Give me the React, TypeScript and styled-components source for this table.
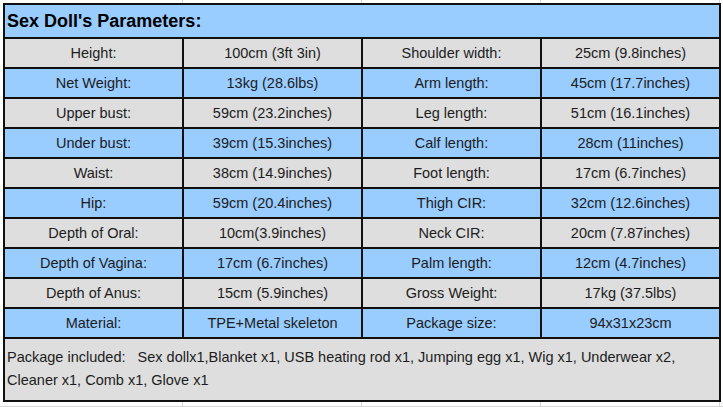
import React from "react";
import styled, { createGlobalStyle } from "styled-components";

type Shade = "gray" | "blue";

const rows: { shade: Shade; cells: [string, string, string, string] }[] = [
  { shade: "gray", cells: ["Height:", "100cm (3ft 3in)", "Shoulder width:", "25cm (9.8inches)"] },
  { shade: "blue", cells: ["Net Weight:", "13kg (28.6lbs)", "Arm length:", "45cm (17.7inches)"] },
  { shade: "gray", cells: ["Upper bust:", "59cm (23.2inches)", "Leg length:", "51cm (16.1inches)"] },
  { shade: "blue", cells: ["Under bust:", "39cm (15.3inches)", "Calf length:", "28cm (11inches)"] },
  { shade: "gray", cells: ["Waist:", "38cm (14.9inches)", "Foot length:", "17cm (6.7inches)"] },
  { shade: "blue", cells: ["Hip:", "59cm (20.4inches)", "Thigh CIR:", "32cm (12.6inches)"] },
  { shade: "gray", cells: ["Depth of Oral:", "10cm(3.9inches)", "Neck CIR:", "20cm (7.87inches)"] },
  { shade: "blue", cells: ["Depth of Vagina:", "17cm (6.7inches)", "Palm length:", "12cm (4.7inches)"] },
  { shade: "gray", cells: ["Depth of Anus:", "15cm (5.9inches)", "Gross Weight:", "17kg (37.5lbs)"] },
  { shade: "blue", cells: ["Material:", "TPE+Metal skeleton", "Package size:", "94x31x23cm"] },
];

const BLUE = "#99ccff";
const GRAY = "#dedede";

export default function App() {
  return (
    <Sheet>
      <GlobalStyle />
      <GridStrip $height={3}>
        {[0, 1, 2, 3].map((i) => (
          <GridCell key={i} />
        ))}
      </GridStrip>
      <ParamTable>
        <TitleCell>Sex Doll's Parameters:</TitleCell>
        {rows.map((row, r) =>
          row.cells.map((text, c) => (
            <Cell key={`${r}-${c}`} $shade={row.shade}>
              {text}
            </Cell>
          ))
        )}
        <PackageCell>
          <span>
            {"Package included:   Sex dollx1,Blanket x1, USB heating rod x1, Jumping egg x1, Wig x1, Underwear x2,"}
            <br />
            {"Cleaner x1, Comb x1, Glove x1"}
          </span>
        </PackageCell>
      </ParamTable>
      <GridStrip $height={4} $bottomLine>
        {[0, 1, 2, 3].map((i) => (
          <GridCell key={i} />
        ))}
      </GridStrip>
    </Sheet>
  );
}

const GlobalStyle = createGlobalStyle`
  html,
  body {
    margin: 0;
    padding: 0;
    background: #ffffff;
    font-family: "Liberation Sans", Arial, sans-serif;
  }
  *,
  *:before,
  *:after {
    box-sizing: border-box;
  }
`;

const Sheet = styled.main`
  width: 723px;
  height: 407px;
  overflow: hidden;
  background: #ffffff;
`;

const GridStrip = styled.div<{ $height: number; $bottomLine?: boolean }>`
  height: ${(p) => p.$height}px;
  display: grid;
  grid-template-columns: repeat(4, 179px);
  padding-left: 4px;
  border-bottom: ${(p) => (p.$bottomLine ? "1px solid #d6d6d6" : "none")};
  box-sizing: content-box;
`;

const GridCell = styled.div`
  border-right: 1px solid #d6d6d6;
`;

const ParamTable = styled.section`
  margin-left: 3px;
  width: 718px;
  display: grid;
  grid-template-columns: repeat(4, 177px);
  gap: 2px;
  padding: 2px;
  background: #101010;
`;

const TitleCell = styled.div`
  grid-column: 1 / -1;
  height: 32px;
  background: ${BLUE};
  display: flex;
  align-items: center;
  padding: 1px 0 0 2px;
  font-size: 18px;
  font-weight: 700;
  color: #000;
`;

const Cell = styled.div<{ $shade: Shade }>`
  height: 28px;
  background: ${(p) => (p.$shade === "blue" ? BLUE : GRAY)};
  display: flex;
  align-items: center;
  justify-content: center;
  font-size: 14.5px;
  color: #1c1c1c;
  white-space: nowrap;
`;

const PackageCell = styled.div`
  grid-column: 1 / -1;
  height: 61px;
  background: ${GRAY};
  display: flex;
  align-items: center;
  padding: 0 2px 2px;
  font-size: 14.5px;
  line-height: 23px;
  color: #1c1c1c;
  white-space: pre;
`;
